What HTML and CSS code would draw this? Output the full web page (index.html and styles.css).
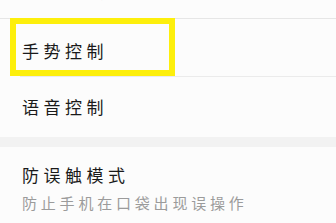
FILE: index.html
```html
<!DOCTYPE html>
<html lang="zh-CN">
<head>
    <meta charset="UTF-8">
    <meta name="viewport" content="width=device-width, initial-scale=1.0">
    <title>设置</title>
    <link rel="stylesheet" href="styles.css">
</head>
<body>
    <div class="peek"><span class="title">智能辅助</span></div>
    <div class="list">
        <div class="row first">
            <span class="title">手势控制</span>
            <div class="highlight"></div>
        </div>
        <div class="row second">
            <span class="title">语音控制</span>
        </div>
    </div>
    <div class="gap"></div>
    <div class="row third">
        <span class="title">防误触模式</span>
        <span class="sub">防止手机在口袋出现误操作</span>
    </div>
</body>
</html>
```

FILE: styles.css
```css
body {
    margin: 0;
    background-color: #fcfcfc;
    font-family: "Noto Sans CJK SC", "Noto Sans", sans-serif;
    color: #1a1a1a;
}
.peek {
    height: 18px;
    overflow: hidden;
    padding-left: 30px;
}
.peek .title {
    display: block;
    margin-top: -19px;
    opacity: 0.5;
}
.list {
    border-top: 1px solid #e6e6e6;
}
.row {
    position: relative;
    padding-left: 22px;
}
.title {
    display: block;
    font-size: 17px;
    line-height: 20px;
    letter-spacing: 4.5px;
}
.sub {
    display: block;
    font-size: 15px;
    line-height: 20px;
    letter-spacing: 3.8px;
    color: #9b9b9b;
    margin-top: 8px;
}
.first {
    padding-top: 22px;
    padding-bottom: 16px;
}
.first::after {
    content: "";
    position: absolute;
    left: 20px;
    right: 0;
    bottom: 0;
    height: 1px;
    background-color: #ebebeb;
}
.second {
    padding-top: 20px;
    padding-bottom: 20px;
}
.gap {
    height: 10px;
    background-color: #f2f2f2;
}
.third {
    padding-top: 18px;
    padding-bottom: 12px;
}
.highlight {
    position: absolute;
    left: 10px;
    top: -1px;
    width: 153px;
    height: 46px;
    border: 6px solid #fdef0c;
}
```
